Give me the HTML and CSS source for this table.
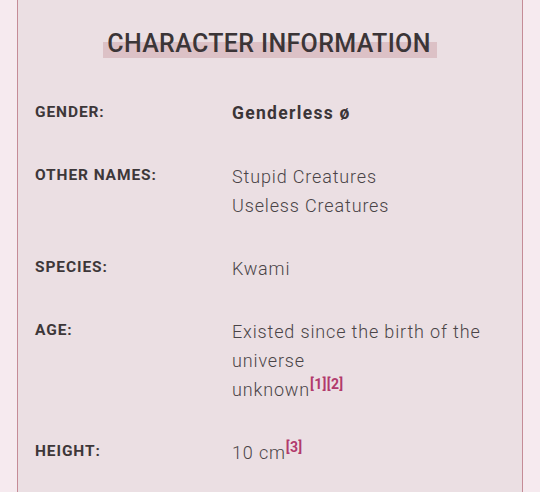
FILE: index.html
```html
<!DOCTYPE html>
<html lang="en">
<head>
<meta charset="utf-8">
<link rel="stylesheet" href="styles.css">
</head>
<body>
<div class="page">
  <section class="infobox">
    <h2 class="title"><span class="mark">CHARACTER INFORMATION</span></h2>
    <dl class="rows">
      <dt class="label">GENDER:</dt>
      <dd class="value strong">Genderless ø</dd>

      <dt class="label">OTHER NAMES:</dt>
      <dd class="value">Stupid Creatures<br>Useless Creatures</dd>

      <dt class="label">SPECIES:</dt>
      <dd class="value">Kwami</dd>

      <dt class="label">AGE:</dt>
      <dd class="value">Existed since the birth of the universe<br>unknown<sup class="ref">[1][2]</sup></dd>

      <dt class="label">HEIGHT:</dt>
      <dd class="value">10 cm<sup class="ref">[3]</sup></dd>
    </dl>
  </section>
</div>
</body>
</html>
```
FILE: styles.css
```css
html, body {
  margin: 0;
  padding: 0;
  height: 100%;
  background: #f6eaef;
  overflow: hidden;
}
.page {
  padding: 0 17px;
  height: 100%;
}
.infobox {
  box-sizing: border-box;
  width: 506px;
  height: 100%;
  overflow: hidden;
  background: #ebdfe3;
  border-left: 1px solid #c58c97;
  border-right: 1px solid #c58c97;
  padding: 29px 0 0 17px;
  font-family: Roboto, "Liberation Sans", sans-serif;
}
.title {
  margin: 0 0 0 -17px;
  text-align: center;
  font-size: 25px;
  font-weight: 500;
  line-height: 30px;
  color: #3b3537;
  letter-spacing: 0.35px;
}
.mark {
  padding: 0 6px 0 4px;
  background: linear-gradient(to bottom, transparent 46%, #dcc1c6 46%, #dcc1c6 100%);
}
.rows {
  margin: 39px 0 0 0;
  display: grid;
  grid-template-columns: 197px 270px;
  row-gap: 33px;
  align-items: start;
}
.label {
  margin: 0;
  font-size: 15.5px;
  font-weight: 700;
  color: #3d3739;
  line-height: 29px;
  letter-spacing: 0.9px;
}
.value {
  margin: 0;
  padding-top: 1px;
  font-size: 18px;
  font-weight: 300;
  color: #4a4447;
  line-height: 29px;
  letter-spacing: 0.85px;
}
.value.strong {
  font-weight: 700;
  font-size: 17.5px;
  color: #3b3537;
  letter-spacing: 1.3px;
}
.ref {
  font-size: 14px;
  font-weight: 700;
  color: #b23a6c;
  line-height: 0;
  vertical-align: 7px;
  letter-spacing: 0.3px;
}
```
